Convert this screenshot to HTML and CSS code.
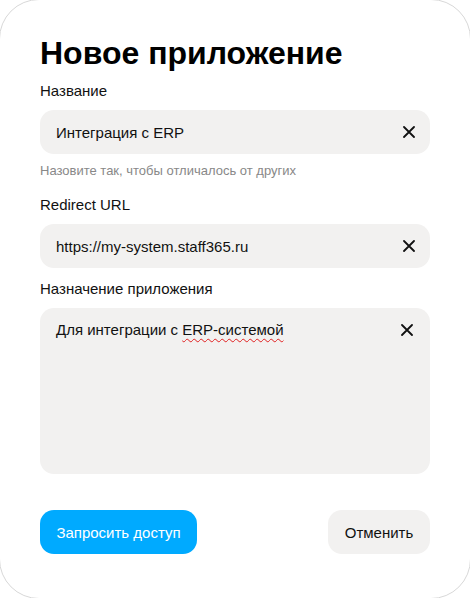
FILE: index.html
```html
<!DOCTYPE html>
<html lang="ru">
<head>
    <meta charset="UTF-8">
    <meta name="viewport" content="width=device-width, initial-scale=1.0">
    <title>Новое приложение</title>
    <link rel="stylesheet" href="styles.css">
</head>
<body>
    <div class="modal">
        <h1 class="title">Новое приложение</h1>

        <label class="label">Название</label>
        <div class="field">
            <span class="value">Интеграция с ERP</span>
            <button class="clear">
                <svg width="12" height="12" viewBox="0 0 12 12"><path d="M1 1L11 11M11 1L1 11" stroke="#111" stroke-width="1.8" stroke-linecap="round"/></svg>
            </button>
        </div>
        <div class="hint">Назовите так, чтобы отличалось от других</div>

        <label class="label label-gap">Redirect URL</label>
        <div class="field">
            <span class="value">https://my-system.staff365.ru</span>
            <button class="clear">
                <svg width="12" height="12" viewBox="0 0 12 12"><path d="M1 1L11 11M11 1L1 11" stroke="#111" stroke-width="1.8" stroke-linecap="round"/></svg>
            </button>
        </div>

        <label class="label label-small-gap">Назначение приложения</label>
        <div class="field area">
            <span class="value">Для интеграции с <span class="typo">ERP-системой</span></span>
            <button class="clear">
                <svg width="12" height="12" viewBox="0 0 12 12"><path d="M1 1L11 11M11 1L1 11" stroke="#111" stroke-width="1.8" stroke-linecap="round"/></svg>
            </button>
        </div>

        <div class="actions">
            <button class="button primary">Запросить доступ</button>
            <button class="button secondary">Отменить</button>
        </div>
    </div>
</body>
</html>
```

FILE: styles.css
```css
*{
    margin: 0;
    padding: 0;
    box-sizing: border-box;
}
html, body{
    height: 100%;
}
body{
    font-family: "Liberation Sans", Arial, sans-serif;
    background: #fff;
    color: #000;
    overflow: hidden;
}
.modal{
    height: 600px;
    width: 472px;
    margin: -1px;
    background: #fff;
    border: 1px solid #d8d8d8;
    border-radius: 40px;
    padding: 33px 40px 0 40px;
    display: flex;
    flex-direction: column;
}
.title{
    font-size: 32px;
    line-height: 40px;
    font-weight: bold;
    margin-bottom: 8px;
}
.label{
    display: block;
    font-size: 15px;
    line-height: 20px;
    color: #111;
    margin-bottom: 9px;
}
.label-gap{
    margin-top: 16px;
}
.label-small-gap{
    margin-top: 11px;
}
.field{
    height: 44px;
    background: #f2f1f0;
    border-radius: 14px;
    padding: 0 15px 0 16px;
    display: flex;
    align-items: center;
    justify-content: space-between;
}
.value{
    font-size: 15px;
    color: #111;
}
.clear{
    border: none;
    background: none;
    display: flex;
    align-items: center;
}
.area{
    height: 166px;
    align-items: flex-start;
    padding: 12px 17px 0 16px;
    line-height: 20px;
}
.area .clear{
    margin-top: 4px;
}
.typo{
    text-decoration: underline wavy #e02020;
    text-decoration-thickness: 1px;
    text-underline-offset: 3px;
}
.hint{
    font-size: 13px;
    line-height: 16px;
    color: #888;
    margin-top: 9px;
}
.actions{
    margin-top: 36px;
    display: flex;
    justify-content: space-between;
}
.button{
    height: 44px;
    border: none;
    border-radius: 14px;
    font-family: "Liberation Sans", Arial, sans-serif;
    font-size: 15px;
    padding: 0 16px;
}
.primary{
    background: #00aaff;
    color: #fff;
    width: 157px;
}
.secondary{
    background: #f2f1f0;
    color: #111;
    width: 102px;
}
```
